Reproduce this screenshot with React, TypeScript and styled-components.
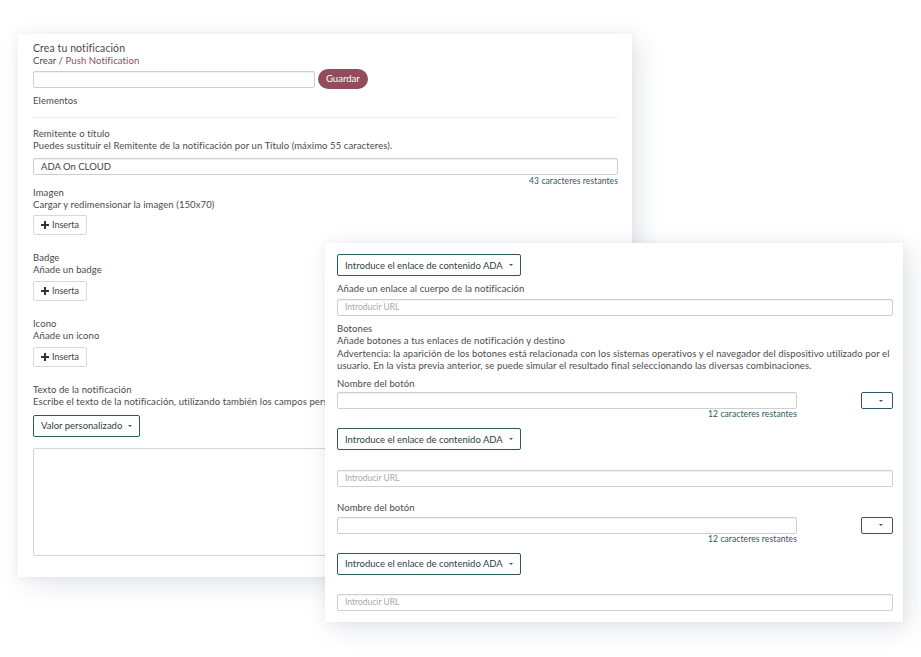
import React from "react";
import { styled, createGlobalStyle } from "styled-components";

const GlobalStyle = createGlobalStyle`
  html, body {
    margin: 0;
    padding: 0;
    background: #ffffff;
  }
  body {
    font-family: "Lato", "Open Sans", sans-serif;
    color: #4a4a4a;
  }
`;

const Stage = styled.div`
  position: relative;
  width: 921px;
  height: 657px;
  overflow: hidden;
  background: #ffffff;
`;

const Card = styled.div<{ $left: number; $top: number; $width: number; $height: number }>`
  position: absolute;
  left: ${(p) => p.$left}px;
  top: ${(p) => p.$top}px;
  width: ${(p) => p.$width}px;
  height: ${(p) => p.$height}px;
  box-sizing: border-box;
  background: #ffffff;
  box-shadow: 6px 6px 24px rgba(40, 50, 90, 0.13), 0 0 8px rgba(40, 50, 90, 0.05);
  display: flex;
  flex-direction: column;
  overflow: hidden;
`;

const Body = styled.div<{ $padding: string }>`
  padding: ${(p) => p.$padding};
  display: flex;
  flex-direction: column;
`;

const Line = styled.div<{ $mt?: number; $size?: number }>`
  margin-top: ${(p) => p.$mt ?? 0}px;
  font-size: ${(p) => p.$size ?? 9.5}px;
  line-height: 12.5px;
  letter-spacing: 0.1px;
  white-space: nowrap;
  color: #4a4a4a;
`;

const Accent = styled.span`
  color: #914a5a;
`;

const Row = styled.div<{ $mt?: number }>`
  margin-top: ${(p) => p.$mt ?? 0}px;
  display: flex;
  align-items: center;
  gap: 3px;
`;

const TextInput = styled.div<{ $width?: number; $placeholder?: boolean; $mt?: number }>`
  box-sizing: border-box;
  margin-top: ${(p) => p.$mt ?? 0}px;
  height: 17px;
  width: ${(p) => (p.$width ? `${p.$width}px` : "100%")};
  border: 1px solid #cfcfcf;
  border-radius: 2px;
  box-shadow: inset 0 1px 1px rgba(0, 0, 0, 0.06);
  padding: 0 7px;
  font-size: ${(p) => (p.$placeholder ? 8.5 : 9.5)}px;
  line-height: 15px;
  color: ${(p) => (p.$placeholder ? "#a8a8a8" : "#444")};
  white-space: nowrap;
`;

const SaveButton = styled.div`
  height: 20px;
  padding: 0 8px;
  border-radius: 10px;
  background: #934c5c;
  color: #fff;
  font-size: 9.5px;
  line-height: 20px;
`;

const Divider = styled.div<{ $mt: number }>`
  margin-top: ${(p) => p.$mt}px;
  height: 1px;
  background: #ececec;
`;

const Counter = styled.div<{ $mt?: number }>`
  margin-top: ${(p) => p.$mt ?? 0}px;
  align-self: flex-end;
  font-size: 8.5px;
  line-height: 11px;
  letter-spacing: 0.1px;
  color: #2b5861;
  white-space: nowrap;
`;

const InsertButton = styled.div<{ $mt: number }>`
  margin-top: ${(p) => p.$mt}px;
  align-self: flex-start;
  box-sizing: border-box;
  height: 20px;
  width: 54px;
  border: 1px solid #d8d8d8;
  border-radius: 2px;
  display: flex;
  align-items: center;
  justify-content: center;
  gap: 3px;
  font-size: 9px;
  color: #444;
`;

const DropButton = styled.div<{ $mt: number }>`
  margin-top: ${(p) => p.$mt}px;
  align-self: flex-start;
  box-sizing: border-box;
  height: 22px;
  border: 1px solid #2d5a62;
  border-radius: 2px;
  padding: 0 7px;
  display: flex;
  align-items: center;
  gap: 6px;
  font-size: 9.5px;
  color: #2f3f44;
  white-space: nowrap;
`;

const Caret = styled.span`
  display: inline-block;
  width: 0;
  height: 0;
  border-left: 2.5px solid transparent;
  border-right: 2.5px solid transparent;
  border-top: 2.5px solid #555;
`;

const SmallSelect = styled.div`
  box-sizing: border-box;
  width: 32px;
  height: 17px;
  border: 1px solid #2d5a62;
  border-radius: 2px;
  display: flex;
  align-items: center;
  justify-content: flex-end;
  padding-right: 9px;
`;

const TextArea = styled.div<{ $mt: number }>`
  margin-top: ${(p) => p.$mt}px;
  box-sizing: border-box;
  height: 108px;
  border: 1px solid #d4d4d4;
  border-radius: 2px;
`;

const NameRow = styled.div<{ $mt: number }>`
  margin-top: ${(p) => p.$mt}px;
  display: flex;
  justify-content: space-between;
  align-items: flex-start;
`;

const NameColumn = styled.div`
  width: 460px;
  display: flex;
  flex-direction: column;
`;

const Plus = () => (
  <svg width="8" height="8" viewBox="0 0 8 8">
    <path d="M3 0h2v3h3v2H5v3H3V5H0V3h3z" fill="#333" />
  </svg>
);

function Insert({ mt }: { mt: number }) {
  return (
    <InsertButton $mt={mt}>
      <Plus />
      Inserta
    </InsertButton>
  );
}

function LinkDropdown({ mt }: { mt: number }) {
  return (
    <DropButton $mt={mt}>
      Introduce el enlace de contenido ADA
      <Caret />
    </DropButton>
  );
}

function ButtonName({ mt }: { mt: number }) {
  return (
    <>
      <Line $mt={mt}>Nombre del botón</Line>
      <NameRow $mt={2}>
        <NameColumn>
          <TextInput />
          <Counter>12 caracteres restantes</Counter>
        </NameColumn>
        <SmallSelect>
          <Caret />
        </SmallSelect>
      </NameRow>
    </>
  );
}

export default function App() {
  return (
    <Stage>
      <GlobalStyle />
      <Card $left={18} $top={34} $width={614} $height={543}>
        <Body $padding="8px 14px 20px 15px">
          <Line $size={10.5}>Crea tu notificación</Line>
          <Line>
            Crear / <Accent>Push Notification</Accent>
          </Line>
          <Row $mt={2}>
            <TextInput $width={282} />
            <SaveButton>Guardar</SaveButton>
          </Row>
          <Line $mt={6}>Elementos</Line>
          <Divider $mt={9} />

          <Line $mt={10}>Remitente o título</Line>
          <Line>Puedes sustituir el Remitente de la notificación por un Título (máximo 55 caracteres).</Line>
          <TextInput $mt={5}>ADA On CLOUD</TextInput>
          <Counter $mt={1}>43 caracteres restantes</Counter>

          <Line>Imagen</Line>
          <Line>Cargar y redimensionar la imagen (150x70)</Line>
          <Insert mt={3} />

          <Line $mt={17}>Badge</Line>
          <Line>Añade un badge</Line>
          <Insert mt={4} />

          <Line $mt={17}>Icono</Line>
          <Line>Añade un icono</Line>
          <Insert mt={4} />

          <Line $mt={17}>Texto de la notificación</Line>
          <Line>Escribe el texto de la notificación, utilizando también los campos personalizados si lo deseas.</Line>
          <DropButton $mt={6}>
            Valor personalizado
            <Caret />
          </DropButton>
          <TextArea $mt={11} />
        </Body>
      </Card>

      <Card $left={325} $top={243} $width={578} $height={379}>
        <Body $padding="11px 10px 11px 12px">
          <LinkDropdown mt={0} />
          <Line $mt={7}>Añade un enlace al cuerpo de la notificación</Line>
          <TextInput $placeholder $mt={3}>
            Introducir URL
          </TextInput>

          <Line $mt={7}>Botones</Line>
          <Line>Añade botones a tus enlaces de notificación y destino</Line>
          <Line>
            Advertencia: la aparición de los botones está relacionada con los sistemas operativos y el navegador del dispositivo utilizado por el
          </Line>
          <Line>usuario. En la vista previa anterior, se puede simular el resultado final seleccionando las diversas combinaciones.</Line>

          <ButtonName mt={5} />
          <LinkDropdown mt={8} />
          <TextInput $placeholder $mt={20}>
            Introducir URL
          </TextInput>

          <ButtonName mt={15} />
          <LinkDropdown mt={8} />
          <TextInput $placeholder $mt={19}>
            Introducir URL
          </TextInput>
        </Body>
      </Card>
    </Stage>
  );
}
